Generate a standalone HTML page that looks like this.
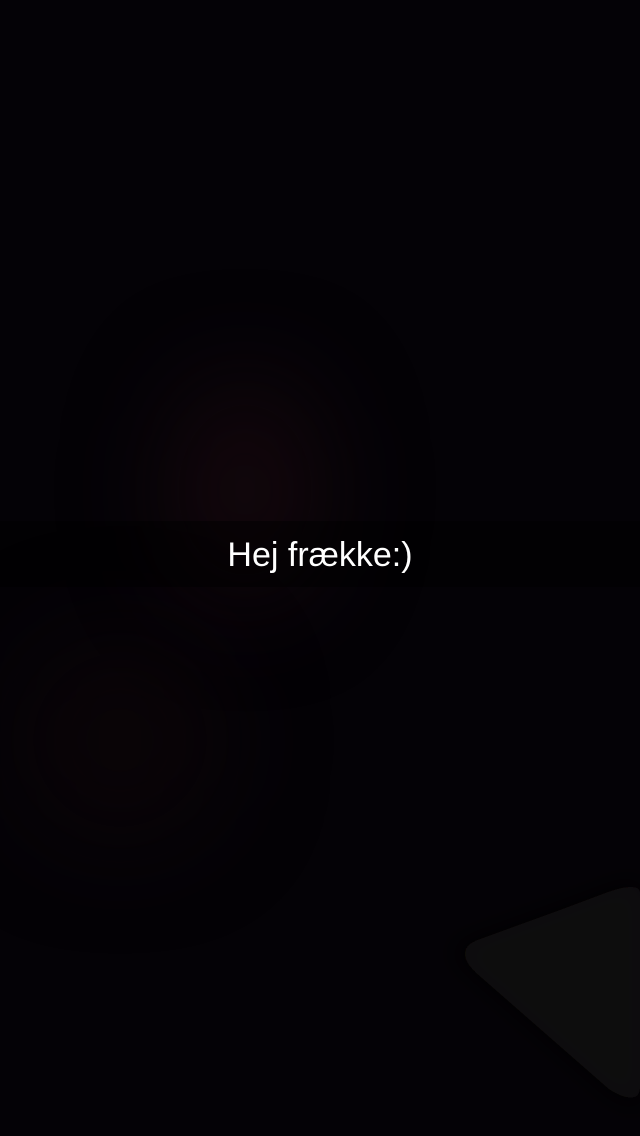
<!DOCTYPE html>
<html><head><meta charset="utf-8"><style>
html,body{margin:0;padding:0;}
body{width:640px;height:1136px;background:#040206;position:relative;overflow:hidden;font-family:"Liberation Sans",Arial,sans-serif;}
.g{position:absolute;border-radius:50%;filter:blur(50px);}
.bar{position:absolute;left:0;top:521px;width:640px;height:66px;background:rgba(0,0,0,0.5);}
.t{position:absolute;left:0;width:640px;top:534px;text-align:center;color:#fff;font-size:34px;line-height:42px;}
.tri{position:absolute;left:0;top:0;width:640px;height:1136px;}
</style></head><body>
<div class="g" style="left:170px;top:380px;width:150px;height:220px;background:#13070c;"></div>
<div class="g" style="left:20px;top:640px;width:200px;height:200px;background:#0a0407;"></div>
<svg class="tri" viewBox="0 0 640 1136"><defs><filter id="b"><feGaussianBlur stdDeviation="14"/></filter></defs>
<polygon points="450,950 560,910 640,880 640,1110 610,1090" fill="#110c0a" filter="url(#b)"/>
</svg>
<div class="bar"></div>
<div class="t">Hej frække:)</div>
</body></html>
